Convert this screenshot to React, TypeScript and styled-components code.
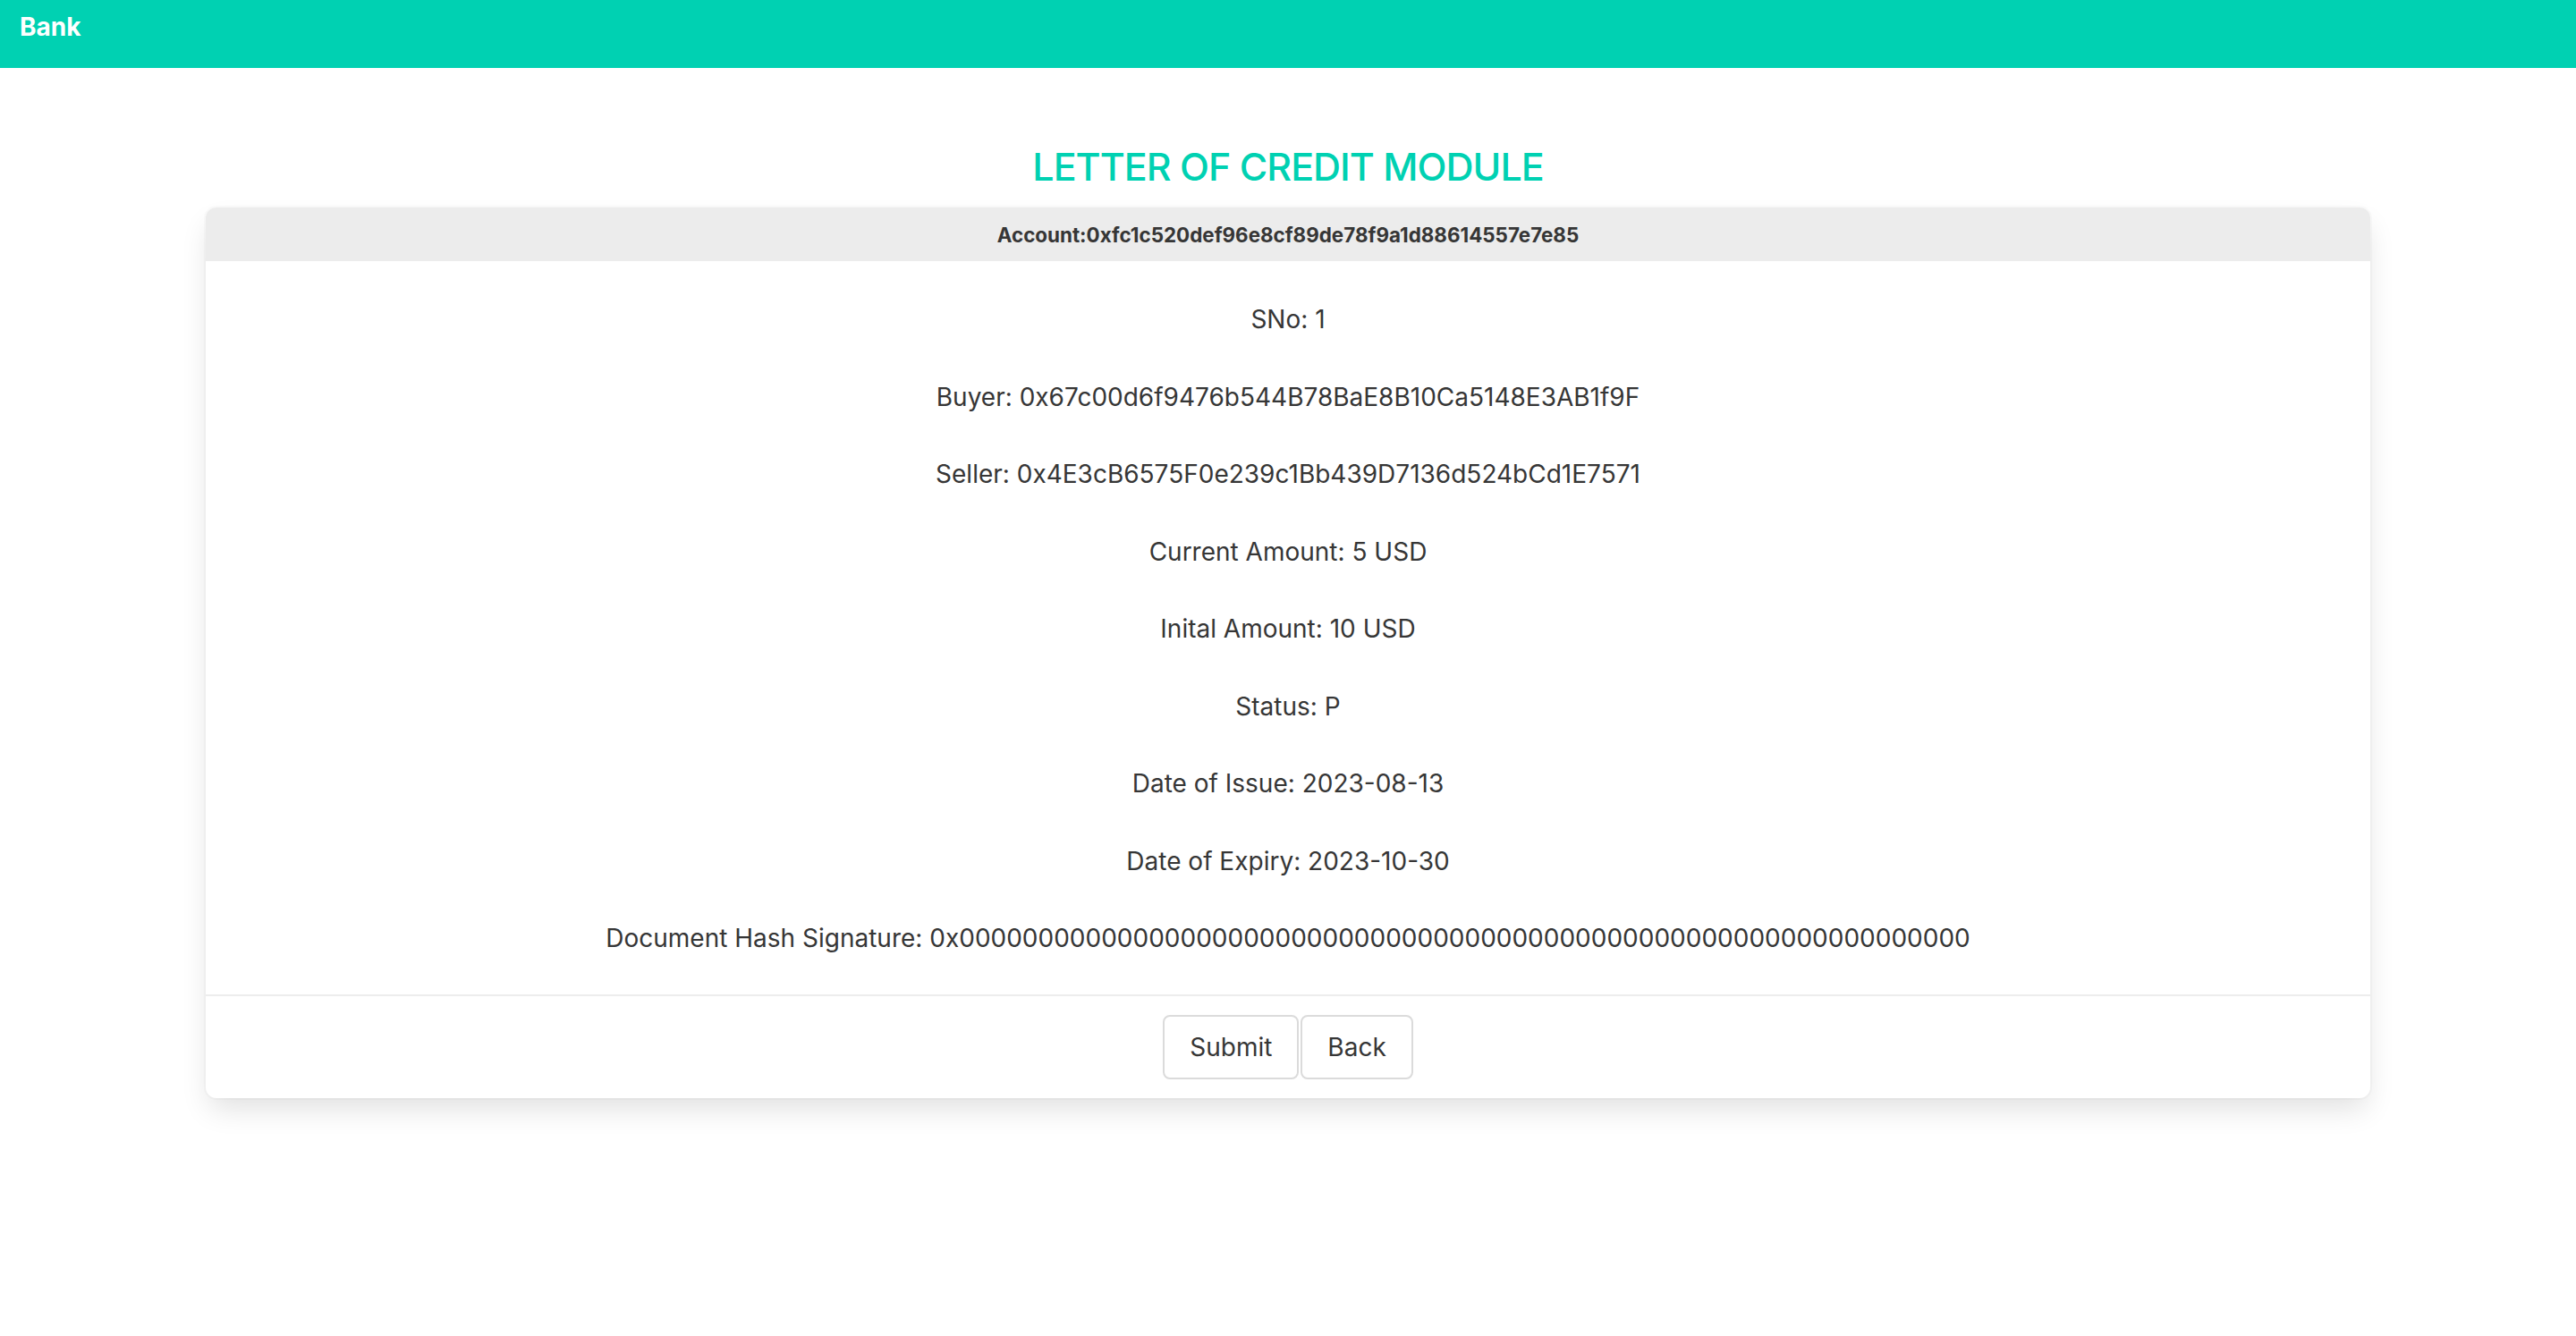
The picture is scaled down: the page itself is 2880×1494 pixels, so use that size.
import React from "react";
import styled, { createGlobalStyle } from "styled-components";

const Global = createGlobalStyle`
  html, body { margin: 0; padding: 0; background: #ffffff; }
  body { font-family: Inter, "Noto Sans", "Liberation Sans", sans-serif; color: #363636; }
  * { box-sizing: border-box; }
`;

const NavBar = styled.nav`
  height: 76px;
  background: #00d1b2;
  display: flex;
  align-items: flex-start;
  padding: 12px 22px 0;
`;

const Brand = styled.span`
  color: #ffffff;
  font-weight: 700;
  font-size: 28px;
  line-height: 36px;
`;

const Main = styled.main`
  display: flex;
  flex-direction: column;
  align-items: center;
  padding: 0 230px 80px;
`;

const Title = styled.h1`
  margin: 0;
  height: 156px;
  display: flex;
  align-items: center;
  justify-content: center;
  padding-top: 76px;
  padding-bottom: 12px;
  color: #00d1b2;
  font-size: 43px;
  font-weight: 500;
  letter-spacing: -1px;
`;

const Card = styled.section`
  width: 100%;
  background: #ffffff;
  border-radius: 12px;
  box-shadow: 0 16px 32px -4px rgba(10, 10, 10, 0.12), 0 0 0 2px rgba(10, 10, 10, 0.02);
  overflow: hidden;
`;

const CardHeader = styled.header`
  height: 60px;
  background: #ececec;
  display: flex;
  align-items: center;
  justify-content: center;
  font-size: 22.4px;
  font-weight: 700;
  color: #363636;
`;

const CardContent = styled.div`
  display: flex;
  flex-direction: column;
  align-items: center;
  gap: 40.5px;
  padding: 42px 24px 40px;
`;

const Line = styled.p`
  margin: 0;
  font-size: 28px;
  line-height: 46px;
  color: #363636;
  white-space: nowrap;
`;

const CardFooter = styled.footer`
  border-top: 2px solid #ededed;
  height: 116px;
  display: flex;
  align-items: center;
  justify-content: center;
  gap: 2px;
`;

const Button = styled.button`
  height: 72px;
  padding: 0 28px;
  background: #ffffff;
  border: 2px solid #dbdbdb;
  border-radius: 8px;
  font-family: inherit;
  font-size: 28px;
  color: #363636;
  cursor: pointer;
`;

const rows: [string, string][] = [
  ["SNo", "1"],
  ["Buyer", "0x67c00d6f9476b544B78BaE8B10Ca5148E3AB1f9F"],
  ["Seller", "0x4E3cB6575F0e239c1Bb439D7136d524bCd1E7571"],
  ["Current Amount", "5 USD"],
  ["Inital Amount", "10 USD"],
  ["Status", "P"],
  ["Date of Issue", "2023-08-13"],
  ["Date of Expiry", "2023-10-30"],
  ["Document Hash Signature", "0x" + "0".repeat(64)],
];

export default function App() {
  return (
    <>
      <Global />
      <NavBar>
        <Brand>Bank</Brand>
      </NavBar>
      <Main>
        <Title>LETTER OF CREDIT MODULE</Title>
        <Card>
          <CardHeader>Account:0xfc1c520def96e8cf89de78f9a1d88614557e7e85</CardHeader>
          <CardContent>
            {rows.map(([k, v]) => (
              <Line key={k}>
                {k}: {v}
              </Line>
            ))}
          </CardContent>
          <CardFooter>
            <Button>Submit</Button>
            <Button>Back</Button>
          </CardFooter>
        </Card>
      </Main>
    </>
  );
}
